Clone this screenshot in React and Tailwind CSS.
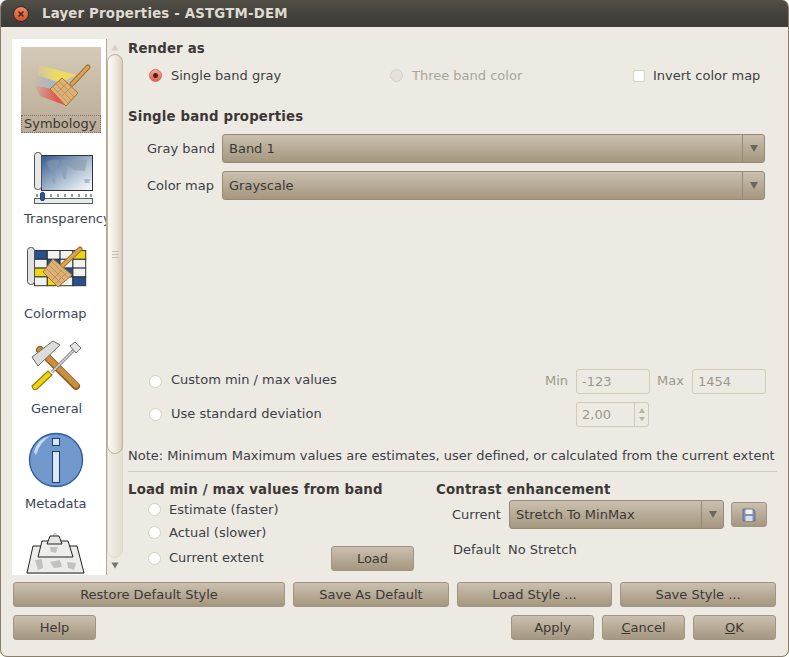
const BTN = 'flex items-center justify-center h-[25px] rounded-[3px] border border-[#a09582] bg-gradient-to-b from-[#cbc0b0] to-[#a5977f] text-[#3c3836] text-[13px]'

const Btn = ({ w, children }) => (
  <button className={BTN} style={{ width: w }}>{children}</button>
)

const Radio = ({ on, off }) => (
  <span className={`block w-[13px] h-[13px] rounded-full border shrink-0 flex items-center justify-center ${on ? 'border-[#d8675a] bg-gradient-to-b from-[#f7a59a] to-[#ea5c4d]' : off ? 'border-[#d6d1c6] bg-[#e6e2da]' : 'border-[#d8d0c0] bg-white'}`}>
    {on && <span className="block w-[5px] h-[5px] rounded-full bg-[#3a2a28]" />}
  </span>
)

const Combo = ({ label, w = 'flex-1', arrowW = 'w-[22px]' }) => (
  <div className={`flex items-stretch h-[29px] rounded-[3px] border border-[#958a77] bg-gradient-to-b from-[#cbc0b0] to-[#a5977f] ${w}`}>
    <span className="flex-1 flex items-center pl-[6px] text-[#3c3836]">{label}</span>
    <span className={`flex items-center justify-center border-l border-[#958a77] ${arrowW}`}>
      <svg width="10" height="9" viewBox="0 0 10 9"><path d="M1 1 H9 L5 8 Z" fill="#6b675f" /></svg>
    </span>
  </div>
)

const Title = ({ children }) => <div className="h-[18px] pt-[2px] flex items-center font-bold text-[13.33px] tracking-[0.15px] text-[#3c3836]">{children}</div>

const DisabledInput = ({ value }) => (
  <span className="flex items-center w-[74px] h-[25px] pl-[5px] rounded-[3px] border border-[#d3c9b4] text-[#9d988d]">{value}</span>
)

const SymbologyIcon = () => (
  <svg width="80" height="66" viewBox="21 47 80 66" className="block">
    <defs>
      <linearGradient id="fadeA" x1="0" x2="1" y1="0" y2="0">
        <stop offset="0.15" stopColor="#fff" stopOpacity="0" />
        <stop offset="0.45" stopColor="#fff" stopOpacity="1" />
      </linearGradient>
      <mask id="fadeM"><rect x="21" y="47" width="80" height="66" fill="url(#fadeA)" /></mask>
    </defs>
    <g mask="url(#fadeM)">
      <path d="M39 65 L76 75 L60 83 L37 75 Z" fill="#eeda62" />
      <path d="M37 75 L60 83 L52 90 L35 85 Z" fill="#9fb4c8" />
      <path d="M34 85 L51 89 L67 106 L40 96 Z" fill="#e5544f" />
    </g>
    <path d="M72 84 L88 67" stroke="#9c6f2c" strokeWidth="5" strokeLinecap="round" />
    <path d="M72 84 L88 67" stroke="#d9a45c" strokeWidth="3" strokeLinecap="round" />
    <path d="M62 78 L78 93 L66 106 L50 89 Z" fill="#dcb27a" stroke="#a5752f" />
    <path d="M56 84 L71 100 M53 87 L68 103 M59 81 L74 97 M58 92 L68 82 M62 96 L72 86" stroke="#b98a47" strokeWidth="0.8" />
  </svg>
)

const TransparencyIcon = () => (
  <svg width="80" height="66" viewBox="21 142 80 66" className="block">
    <defs>
      <linearGradient id="mapG" x1="0" x2="1" y1="0" y2="1">
        <stop offset="0" stopColor="#34598f" />
        <stop offset="0.6" stopColor="#b4c4d6" />
        <stop offset="1" stopColor="#ffffff" />
      </linearGradient>
    </defs>
    <rect x="41.5" y="155.5" width="51" height="35" fill="url(#mapG)" stroke="#2f3336" />
    <path d="M47 161 Q54 158 60 161 L57 168 L52 171 L48 167 Z M52 173 L56 173 L55 185 L52 181 Z M61 160 L67 160 L66 165 L62 165 Z M61 167 L67 167 L66 180 L63 178 Z M68 160 L87 160 L85 171 L74 170 L68 166 Z M84 179 L90 179 L89 183 L85 183 Z" fill="#8899ac" opacity="0.55" />
    <rect x="34.5" y="152.5" width="7" height="37" rx="3" fill="#e7e7e7" stroke="#4a5054" />
    <rect x="34.5" y="198.5" width="58" height="5" fill="#e8ebe6" stroke="#555b5e" />
    <path d="M37 194 V197 M44 194 V197 M51 194 V197 M58 194 V197 M65 194 V197 M72 194 V197 M79 194 V197 M86 194 V197 M91 194 V197" stroke="#333" />
    <rect x="40.5" y="192.5" width="4" height="8" rx="1.5" fill="#2d5796" stroke="#22467c" />
  </svg>
)

const ColormapIcon = () => {
  const b = '#27508f', y = '#efd60f', w = '#f1f1ef'
  const cells = [[b, w, w, y], [w, b, w, w], [y, w, b, w], [w, y, w, b]]
  return (
    <svg width="80" height="66" viewBox="21 237 80 66" className="block">
      {cells.map((row, r) => row.map((c, i) => (
        <rect key={`${r}-${i}`} x={34.5 + i * 12.8} y={250.5 + r * 8.8} width="12.8" height="8.8" fill={c} stroke="#2f3336" />
      )))}
      <rect x="27.5" y="247.5" width="7" height="37" rx="3" fill="#e2e2e2" stroke="#4a5054" />
      <path d="M62 266 L80 249" stroke="#a2722c" strokeWidth="5" strokeLinecap="round" />
      <path d="M62 266 L80 249" stroke="#d9a45c" strokeWidth="3" strokeLinecap="round" />
      <path d="M53 259 L72 275 L58 287 L43 272 Z" fill="#dcb27a" stroke="#a5752f" />
      <path d="M49 265 L65 281 M46 268 L62 284 M52 262 L69 278 M52 280 L62 270 M56 283 L66 273" stroke="#b98a47" strokeWidth="0.8" />
    </svg>
  )
}

const GeneralIcon = () => (
  <svg width="80" height="66" viewBox="21 332 80 66" className="block">
    <path d="M40 350 L76 386" stroke="#8f5f1f" strokeWidth="8" strokeLinecap="round" />
    <path d="M40 350 L76 385" stroke="#c98f44" strokeWidth="5.5" strokeLinecap="round" />
    <path d="M32 357 L53 341 L60 345 L38 366 Z" fill="#dcdcda" stroke="#6a6a66" />
    <path d="M52 372 L75 349" stroke="#6a6a66" strokeWidth="3" />
    <path d="M52 372 L75 349" stroke="#dfdfdc" strokeWidth="1.4" />
    <path d="M70 346 L75 342 L81 348 L76 353 Z" fill="#e4e4e2" stroke="#6a6a66" />
    <path d="M32 386 L48 371 L52 375 L37 389 Q33 391 32 386 Z" fill="#efd40f" stroke="#8e7d10" strokeWidth="1.2" />
  </svg>
)

const MetadataIcon = () => (
  <svg width="80" height="66" viewBox="21 427 80 66" className="block">
    <circle cx="56" cy="460" r="26.5" fill="#7199cd" stroke="#2c5a9c" strokeWidth="1.3" />
    <path d="M34 452 Q38 438 50 436 Q40 442 36 455 Z" fill="#c9d9ee" />
    <rect x="52.5" y="438.5" width="7" height="7" fill="#dbe6f3" stroke="#1d3f78" />
    <rect x="52.5" y="451.5" width="7" height="31" fill="#dbe6f3" stroke="#1d3f78" />
  </svg>
)

const OverviewIcon = () => (
  <svg width="80" height="66" viewBox="21 522 80 66" className="block">
    <path d="M27 573 L55 533 L84 573 Z" fill="#e9e9e7" stroke="#b9b9b6" />
    <path d="M27 573 L33 546 H77 L84 573 Z" fill="#ececea" stroke="#222" />
    <path d="M38 557 L42 541 H68 L73 557 Z" fill="#eeeeec" stroke="#222" />
    <path d="M47 544 L50 536 H59 L62 544 Z" fill="#e6e6e4" stroke="#222" />
    <path d="M35 560 L42 559 L43 568 L38 570 Z M50 562 L60 560 L62 567 L54 568 Z M50 547 L58 547 L56 553 L51 552 Z M67 562 L76 563 L74 570 L68 568 Z" fill="#c2c2bf" />
  </svg>
)

const ITEMS = [
  { label: 'Symbology', pl: 'pl-[3px]', Icon: SymbologyIcon, on: true },
  { label: 'Transparency', pl: 'pl-[3px]', Icon: TransparencyIcon },
  { label: 'Colormap', pl: 'pl-[3px]', Icon: ColormapIcon },
  { label: 'General', pl: 'pl-[10px]', Icon: GeneralIcon },
  { label: 'Metadata', pl: 'pl-[4px]', Icon: MetadataIcon },
  { label: '', pl: '', Icon: OverviewIcon },
]

const Sidebar = () => (
  <div className="w-[95px] h-[536px] bg-white border-r border-[#b3a78f] overflow-hidden pl-[9px] pt-[8px] shrink-0">
    {ITEMS.map(({ label, pl, Icon, on }) => (
      <div key={pl + label} className={`w-[80px] h-[86px] mb-[9px] ${on ? 'bg-gradient-to-b from-[#d5cab8] to-[#b9ab96]' : ''}`}>
        <Icon />
        {label && (
          <div className={`flex items-center h-[18px] mt-[2px] pb-[2px] whitespace-nowrap text-[#3b4654] ${pl} ${on ? 'outline-1 outline-dotted outline-[#7c7366] -outline-offset-1 text-[#3c3836]' : ''}`}>{label}</div>
        )}
      </div>
    ))}
  </div>
)

const Scrollbar = () => (
  <div className="w-[16px] h-[536px] flex flex-col items-center shrink-0">
    <svg width="8" height="7" viewBox="0 0 8 7" className="mt-[5px] mb-[3px]"><path d="M4 0.5 L7.5 6.5 H0.5 Z" fill="#d8d1c2" /></svg>
    <div className="w-[16px] h-[504px] rounded-[8px] border border-[#e0d9cb] bg-gradient-to-r from-[#f1eee7] to-[#e4dfd4]">
      <div className="flex flex-col gap-[2px] items-center justify-center w-[16px] h-[400px] -ml-[1px] -mt-[1px] rounded-[8px] border border-[#bdb39e] bg-gradient-to-r from-[#fbfaf6] via-[#f0ebe1] to-[#d9d1c1]">
        <span className="block w-[7px] h-px bg-[#c9c1b0]" />
        <span className="block w-[7px] h-px bg-[#c9c1b0]" />
        <span className="block w-[7px] h-px bg-[#c9c1b0]" />
      </div>
    </div>
    <svg width="8" height="7" viewBox="0 0 8 7" className="mt-[4px]"><path d="M0.5 0.5 H7.5 L4 6.5 Z" fill="#77736a" /></svg>
  </div>
)

const Panel = () => (
  <div className="ml-[5px] w-[649px] h-[536px] text-[#3c3f45]">
    <Title>Render as</Title>
    <div className="mt-[9px] h-[18px] pt-[1px] flex items-center pl-[21px]">
      <Radio on />
      <span className="ml-[9px] w-[219px]">Single band gray</span>
      <Radio off />
      <span className="ml-[9px] w-[221px] text-[#a9a59b]">Three band color</span>
      <span className="block w-[12px] h-[12px] rounded-[2px] border border-[#d8d0c0] bg-white" />
      <span className="ml-[8px] whitespace-nowrap">Invert color map</span>
    </div>
    <div className="mt-[23px]"><Title>Single band properties</Title></div>
    <div className="mt-[9px] flex items-center pl-[19px] pr-[12px]">
      <span className="w-[75px] shrink-0 whitespace-nowrap">Gray band</span>
      <Combo label="Band 1" />
    </div>
    <div className="mt-[8px] flex items-center pl-[19px] pr-[12px]">
      <span className="w-[75px] shrink-0 whitespace-nowrap">Color map</span>
      <Combo label="Grayscale" />
    </div>
    <div className="mt-[169px] h-[25px] flex items-center pl-[21px]">
      <Radio />
      <span className="ml-[9px] flex-1 mb-[4px]">Custom min / max values</span>
      <span className="text-[#9d988d] mr-[8px] mb-[2px]">Min</span>
      <DisabledInput value="-123" />
      <span className="text-[#9d988d] ml-[7px] mr-[8px] mb-[2px]">Max</span>
      <DisabledInput value="1454" />
      <span className="w-[11px]" />
    </div>
    <div className="mt-[7px] h-[26px] flex items-center pl-[21px]">
      <Radio />
      <span className="ml-[9px] w-[405px] mb-[2px]">Use standard deviation</span>
      <span className="flex items-stretch w-[73px] h-[25px] rounded-[3px] border border-[#d3c9b4] text-[#9d988d]">
        <span className="flex-1 flex items-center pl-[5px]">2,00</span>
        <span className="w-[14px] border-l border-[#d3c9b4] flex flex-col items-center justify-between py-[5px]">
          <svg width="6" height="5" viewBox="0 0 6 5"><path d="M3 0 L6 5 H0 Z" fill="#b9b2a3" /></svg>
          <svg width="6" height="4" viewBox="0 0 6 4"><path d="M0 0 H6 L3 4 Z" fill="#b9b2a3" /></svg>
        </span>
      </span>
    </div>
    <div className="mt-[19px] h-[18px] flex items-center whitespace-nowrap">Note: Minimum Maximum values are estimates, user defined, or calculated from the current extent</div>
    <div className="mt-[7px] w-[649px] h-px bg-[#d3ccbe]" />
    <div className="mt-[8px] flex">
      <div className="w-[308px]">
        <Title>Load min / max values from band</Title>
        <div className="mt-[2px] h-[18px] pt-[1px] flex items-center pl-[20px]"><Radio /><span className="ml-[8px]">Estimate (faster)</span></div>
        <div className="mt-[5px] h-[18px] pt-[1px] flex items-center pl-[20px]"><Radio /><span className="ml-[8px]">Actual (slower)</span></div>
        <div className="mt-[4px] h-[26px] flex items-center pl-[20px] pr-[22px]">
          <Radio /><span className="ml-[8px] flex-1 mb-[2px]">Current extent</span>
          <Btn w={83}>Load</Btn>
        </div>
      </div>
      <div className="flex-1">
        <Title>Contrast enhancement</Title>
        <div className="mt-[2px] flex items-center pl-[16px]">
          <span className="w-[57px]">Current</span>
          <Combo label="Stretch To MinMax" w="w-[215px]" />
          <span className="ml-[7px]">
            <button className={`${BTN} w-[36px]`}>
              <svg width="14" height="14" viewBox="0 0 14 14">
                <path d="M1 1 H11 L13 3 V13 H1 Z" fill="#7f8fb8" stroke="#555f80" strokeWidth="0.7" />
                <rect x="3.5" y="1.5" width="7" height="4.5" fill="#f2f2f2" />
                <rect x="3.5" y="8" width="7" height="5" fill="#d9ddea" />
              </svg>
            </button>
          </span>
        </div>
        <div className="mt-[11px] h-[18px] flex items-center pl-[17px]">
          <span className="w-[55px]">Default</span>
          <span>No Stretch</span>
        </div>
      </div>
    </div>
  </div>
)

export default function App() {
  return (
    <div className="w-[789px] h-[657px] bg-[#edeae3] rounded-[7px] border-x border-b border-[#8a7f68] overflow-hidden text-[13px] leading-none font-['DejaVu_Sans',sans-serif]">
      <div className="h-[27px] flex items-center pl-[12px] bg-gradient-to-b from-[#524f47] via-[#45433d] to-[#3c3b37] text-[#dfdbd2] font-bold text-[13.33px] tracking-[0.18px]">
        <span className="w-[16px] h-[16px] rounded-full bg-gradient-to-b from-[#f2875f] to-[#d9502a] border border-[#2e2c28] flex items-center justify-center">
          <svg width="8" height="8" viewBox="0 0 8 8"><path d="M1.5 1.5 L6.5 6.5 M6.5 1.5 L1.5 6.5" stroke="#3a2a25" strokeWidth="1.5" /></svg>
        </span>
        <span className="ml-[13px]">Layer Properties - ASTGTM-DEM</span>
      </div>
      <div className="pt-[12px] pl-[11px] flex">
        <Sidebar />
        <Scrollbar />
        <Panel />
      </div>
      <div className="mt-[7px] ml-[12px] w-[763px] flex gap-[8px]">
        <Btn w={272}>Restore Default Style</Btn>
        <Btn w={156}>Save As Default</Btn>
        <Btn w={155}>Load Style ...</Btn>
        <Btn w={156}>Save Style ...</Btn>
      </div>
      <div className="mt-[8px] ml-[12px] w-[763px] flex gap-[8px]">
        <Btn w={83}>Help</Btn>
        <span className="flex-1" />
        <Btn w={83}>Apply</Btn>
        <Btn w={83}><span><span className="underline">C</span>ancel</span></Btn>
        <Btn w={83}><span><span className="underline">O</span>K</span></Btn>
      </div>
    </div>
  )
}
